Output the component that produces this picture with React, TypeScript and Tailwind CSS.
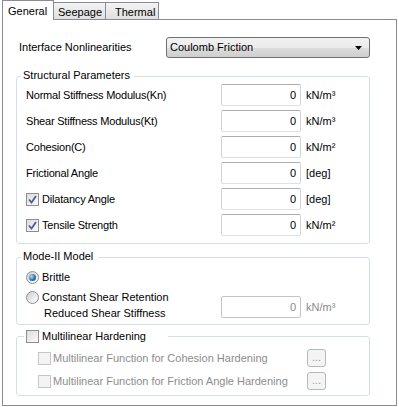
import React from "react";

const font = { fontFamily: '"Liberation Sans", Arial, sans-serif' };

function Check({ checked = false, disabled = false }: { checked?: boolean; disabled?: boolean }) {
  return (
    <span
      className={`flex items-center justify-center w-[13px] h-[13px] shrink-0 border ${
        disabled
          ? "border-[#c6c6c6] bg-[#f4f4f4]"
          : "border-[#8f8f8f] bg-[linear-gradient(135deg,#dcdcdc,#fbfbfb)]"
      }`}
    >
      {checked && (
        <svg width="9" height="9" viewBox="0 0 9 9">
          <path d="M1 4.5 L3.5 7.5 L8 1" fill="none" stroke="#4a5f97" strokeWidth="1.8" />
        </svg>
      )}
    </span>
  );
}

function Radio({ checked = false }: { checked?: boolean }) {
  return (
    <span className="flex items-center justify-center w-[13px] h-[13px] shrink-0 rounded-full border border-[#8e8f8f] bg-[linear-gradient(135deg,#cfcfcf,#ffffff)]">
      {checked && (
        <span className="w-[7px] h-[7px] rounded-full bg-[radial-gradient(circle_at_35%_35%,#a9dcf9,#2a6aa5_60%,#1b4b80)]" />
      )}
    </span>
  );
}

function NumBox({ disabled = false }: { disabled?: boolean }) {
  return (
    <div
      className={`w-[80px] h-[22px] shrink-0 flex items-center justify-end pr-[4px] rounded-[2px] border bg-white ${
        disabled ? "border-[#c4c4c4] text-[#8a8a8a]" : "border-[#abadb3] border-b-[#dbdfe6] border-x-[#d0d3da] text-black"
      }`}
    >
      0
    </div>
  );
}

const rows = [
  { label: "Normal Stiffness Modulus(Kn)", unit: "kN/m³" },
  { label: "Shear Stiffness Modulus(Kt)", unit: "kN/m³" },
  { label: "Cohesion(C)", unit: "kN/m²" },
  { label: "Frictional Angle", unit: "[deg]" },
  { label: "Dilatancy Angle", unit: "[deg]", check: true },
  { label: "Tensile Strength", unit: "kN/m²", check: true },
];

export default function App() {
  return (
    <div className="w-[399px] h-[407px] bg-white text-[11px] leading-[13px] text-black" style={font}>
      {/* tabs */}
      <div className="flex items-start h-[19px] pl-[2px]">
        <div className="relative z-10 w-[52px] h-[20px] border border-b-0 border-[#898c95] bg-white pl-[5px] pt-[4px]">
          General
        </div>
        <div className="-ml-px mt-[2px] w-[53px] h-[17px] border border-b-0 border-[#898c95] bg-[linear-gradient(#f3f3f3,#e0e0e0)] pl-[4px] pt-[3px]">
          Seepage
        </div>
        <div className="-ml-px mt-[2px] w-[54px] h-[17px] border border-b-0 border-[#898c95] bg-[linear-gradient(#f3f3f3,#e0e0e0)] pl-[9px] pt-[3px]">
          Thermal
        </div>
      </div>

      {/* page */}
      <div className="mx-[2px] w-[395px] h-[387px] border border-[#898c95] bg-white pl-[13px] pt-[17px]">
        <div className="flex items-center w-[354px]">
          <span className="ml-[3px] w-[147px]">Interface Nonlinearities</span>
          <div className="w-[204px] h-[21px] flex items-center justify-between rounded-[3px] border border-[#707070] bg-[linear-gradient(#f2f2f2_0%,#ebebeb_50%,#dddddd_51%,#cfcfcf_100%)] pl-[3px] pr-[7px]">
            <span>Coulomb Friction</span>
            <svg width="7" height="4" viewBox="0 0 7 4">
              <path d="M0 0 H7 L3.5 4 Z" fill="#000" />
            </svg>
          </div>
        </div>

        {/* structural parameters */}
        <div className="relative mt-[18px] w-[354px] h-[168px] rounded-[3px] border border-[#d5dfe5] pl-[9px] pt-[7px]">
          <span className="absolute -top-[8px] left-[4px] bg-white pl-[2px] pr-[4px]">Structural Parameters</span>
          <div className="flex flex-col gap-[4px]">
            {rows.map((r) => (
              <div key={r.label} className="flex items-center h-[22px]">
                <div className="w-[195px] flex items-center tracking-[-0.2px]">
                  {r.check && <Check checked />}
                  <span className={r.check ? "ml-[3px]" : ""}>{r.label}</span>
                </div>
                <NumBox />
                <span className="ml-[5px]">{r.unit}</span>
              </div>
            ))}
          </div>
        </div>

        {/* mode II */}
        <div className="relative mt-[13px] w-[354px] h-[68px] rounded-[3px] border border-[#d5dfe5] pl-[9px] pt-[11px]">
          <span className="absolute -top-[8px] left-[4px] bg-white pl-[2px] pr-[5px]">Mode-II Model</span>
          <div className="flex items-center h-[16px]">
            <Radio checked />
            <span className="ml-[3px]">Brittle</span>
          </div>
          <div className="flex items-start mt-[4px]">
            <div className="w-[195px]">
              <div className="flex items-center h-[16px]">
                <Radio />
                <span className="ml-[3px]">Constant Shear Retention</span>
              </div>
              <div className="h-[16px] flex items-center pl-[18px]">Reduced Shear Stiffness</div>
            </div>
            <div className="mt-[7px] flex items-center">
              <NumBox disabled />
              <span className="ml-[5px] text-[#8a8a8a]">kN/m³</span>
            </div>
          </div>
        </div>

        {/* multilinear */}
        <div className="relative mt-[11px] w-[354px] h-[60px] rounded-[3px] border border-[#d5dfe5] pl-[21px] pt-[12px]">
          <div className="absolute -top-[7px] left-[7px] flex items-center h-[13px] bg-white pl-[2px] pr-[22px]">
            <Check />
            <span className="ml-[3px]">Multilinear Hardening</span>
          </div>
          <div className="flex flex-col gap-[5px] text-[#8d8d8d]">
            {["Multilinear Function for Cohesion Hardening", "Multilinear Function for Friction Angle Hardening"].map((t) => (
              <div key={t} className="flex items-center h-[18px]">
                <div className="w-[269px] flex items-center">
                  <Check disabled />
                  <span className="ml-[2px]">{t}</span>
                </div>
                <div className="w-[19px] h-[18px] flex items-center justify-center rounded-[3px] border border-[#b5b9bc] bg-[#f4f4f4] text-[#9a9a9a] leading-none pb-[2px]">
                  ...
                </div>
              </div>
            ))}
          </div>
        </div>
      </div>
    </div>
  );
}
